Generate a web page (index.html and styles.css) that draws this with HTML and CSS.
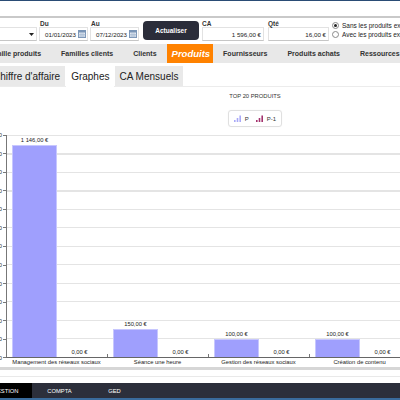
FILE: index.html
```html
<!DOCTYPE html>
<html lang="fr">
<head>
    <meta charset="UTF-8">
    <title>Statistiques - Produits</title>
    <link rel="stylesheet" href="styles.css">
</head>
<body>
    <div class="topbar"></div>
    <div class="header"></div>
    <div class="divider"></div>

    <div class="filters">
        <div class="field f-ref">
            <label>Référence</label>
            <div class="input select"><svg class="caret" width="5" height="3" viewBox="0 0 5 3"><path d="M0 0h5L2.5 3z" fill="#222"/></svg></div>
        </div>
        <div class="field f-date">
            <label>Du</label>
            <div class="input date"><span>01/01/2023</span><svg class="cal" width="8" height="8" viewBox="0 0 8 8"><rect x="0.5" y="0.5" width="7" height="7" fill="#dfe7f1" stroke="#7b96b8"/><rect x="0.5" y="0.5" width="7" height="2" fill="#7b96b8"/><path d="M3 2.5v5M5 2.5v5M0.5 4.5h7M0.5 6h7" stroke="#9fb3cc" stroke-width="0.6"/></svg></div>
        </div>
        <div class="field f-date">
            <label>Au</label>
            <div class="input date"><span>07/12/2023</span><svg class="cal" width="8" height="8" viewBox="0 0 8 8"><rect x="0.5" y="0.5" width="7" height="7" fill="#dfe7f1" stroke="#7b96b8"/><rect x="0.5" y="0.5" width="7" height="2" fill="#7b96b8"/><path d="M3 2.5v5M5 2.5v5M0.5 4.5h7M0.5 6h7" stroke="#9fb3cc" stroke-width="0.6"/></svg></div>
        </div>
        <button class="btn">Actualiser</button>
        <div class="field f-ca">
            <label>CA</label>
            <div class="input num">1 596,00 €</div>
        </div>
        <div class="field f-qte">
            <label>Qté</label>
            <div class="input num">16,00 €</div>
        </div>
        <div class="radios">
            <div class="radio-row"><span class="radio on"></span>Sans les produits exclus</div>
            <div class="radio-row"><span class="radio"></span>Avec les produits exclus</div>
        </div>
    </div>

    <div class="tabs">
        <div class="tab first">Famille produits</div>
        <div class="tab">Familles clients</div>
        <div class="tab">Clients</div>
        <div class="tab active">Produits</div>
        <div class="tab">Fournisseurs</div>
        <div class="tab">Produits achats</div>
        <div class="tab">Ressources</div>
    </div>

    <div class="subtabs">
        <div class="subtab first">Chiffre d'affaire</div>
        <div class="subtab active">Graphes</div>
        <div class="subtab">CA Mensuels</div>
    </div>

    <div class="panel">
        <div class="chart-head">
            <div class="chart-title">Top 20 produits</div>
            <div class="legend">
                <span class="legend-item"><svg width="7" height="7" viewBox="0 0 7 7"><path d="M0 7V5h1.6v2zM2.7 7V3h1.6v4zM5.4 7V0.5H7V7z" fill="#a9a9f7"/></svg>P</span>
                <span class="legend-item"><svg width="7" height="7" viewBox="0 0 7 7"><path d="M0 7V5h1.6v2zM2.7 7V3h1.6v4zM5.4 7V0.5H7V7z" fill="#a3326e"/></svg>P-1</span>
            </div>
        </div>

        <div class="chart">
            <div class="yaxis">
                <span>1 200</span><span>1 100</span><span>1 000</span><span>900</span><span>800</span><span>700</span><span>600</span><span>500</span><span>400</span><span>300</span><span>200</span><span>100</span><span>0</span>
            </div>
            <div class="plot">
                <div class="cat">
                    <div class="bar-col"><span class="val">1 146,00 €</span><div class="bar" style="height: 212px"></div></div>
                    <div class="bar-col"><span class="val">0,00 €</span></div>
                </div>
                <div class="cat">
                    <div class="bar-col"><span class="val">150,00 €</span><div class="bar" style="height: 28px"></div></div>
                    <div class="bar-col"><span class="val">0,00 €</span></div>
                </div>
                <div class="cat">
                    <div class="bar-col"><span class="val">100,00 €</span><div class="bar" style="height: 18.5px"></div></div>
                    <div class="bar-col"><span class="val">0,00 €</span></div>
                </div>
                <div class="cat">
                    <div class="bar-col"><span class="val">100,00 €</span><div class="bar" style="height: 18.5px"></div></div>
                    <div class="bar-col"><span class="val">0,00 €</span></div>
                </div>
            </div>
        </div>
        <div class="xlabels">
            <span>Management des réseaux sociaux</span>
            <span>Séance une heure</span>
            <span>Gestion des réseaux sociaux</span>
            <span>Création de contenu</span>
        </div>
    </div>

    <div class="footer-gap"></div>

    <div class="nav">
        <div class="nav-item active">GESTION</div>
        <div class="nav-item">COMPTA</div>
        <div class="nav-item">GED</div>
    </div>
    <div class="bottombar"></div>
</body>
</html>
```

FILE: styles.css
```css
* {
    margin: 0;
    padding: 0;
    box-sizing: border-box;
}

body {
    width: 400px;
    height: 400px;
    overflow: hidden;
    background: #fff;
    color: #222;
    font-family: "Liberation Sans", Arial, sans-serif;
}

.topbar {
    height: 1px;
    background: #2a4c75;
}

.header {
    height: 15px;
}

.divider {
    height: 2px;
    background: #c9c9c9;
}

/* filters */
.filters {
    height: 24px;
    display: flex;
    align-items: flex-start;
    white-space: nowrap;
}

.field {
    flex-shrink: 0;
}

.field label {
    display: block;
    margin-top: 2px;
    height: 7px;
    font-size: 6.5px;
    line-height: 7px;
    font-weight: bold;
    color: #333;
}

.input {
    height: 14px;
    background: #fff;
    border: 1px solid #e2e2e2;
    border-bottom-color: #c6c6c6;
    display: flex;
    align-items: center;
    font-size: 6.2px;
    color: #222;
}

.f-ref {
    width: 69px;
    margin-left: -32px;
}

.select {
    justify-content: flex-end;
    padding-right: 2px;
}

.f-date {
    width: 49px;
    margin-left: 2px;
}

.f-date label {
    padding-left: 1px;
}

.date {
    justify-content: flex-end;
    gap: 2px;
    padding-right: 1px;
}

.btn {
    width: 56px;
    height: 19px;
    flex-shrink: 0;
    margin: 3px 0 0 4px;
    background: #2b2d3a;
    color: #fff;
    border: none;
    border-radius: 4px;
    font-family: inherit;
    font-size: 6.5px;
    font-weight: bold;
}

.f-ca {
    width: 62px;
    margin-left: 3px;
}

.f-qte {
    width: 61px;
    margin-left: 4px;
}

.num {
    justify-content: flex-end;
    padding-right: 2px;
}

.radios {
    margin: 3px 0 0 3px;
    font-size: 6.5px;
    color: #222;
}

.radio-row {
    height: 9px;
    display: flex;
    align-items: center;
    gap: 3px;
}

.radio {
    width: 7px;
    height: 7px;
    border: 1px solid #8a8a8a;
    border-radius: 50%;
    background: #fff;
    display: flex;
    align-items: center;
    justify-content: center;
}

.radio.on::after {
    content: "";
    width: 3px;
    height: 3px;
    border-radius: 50%;
    background: #222;
}

/* main tabs */
.tabs {
    height: 19px;
    margin-top: 2px;
    background: #e8e8e8;
    display: flex;
    white-space: nowrap;
}

.tab {
    padding: 0 10px;
    flex-shrink: 0;
    display: flex;
    align-items: center;
    font-size: 7px;
    font-weight: bold;
    color: #333;
}

.tab.first {
    margin-left: -23px;
}

.tab.active {
    padding: 0 3px 0 5px;
    background: #ff8200;
    color: #fff;
    font-size: 9.5px;
    font-style: italic;
}

/* sub tabs */
.subtabs {
    height: 21px;
    margin-top: 3px;
    display: flex;
    gap: 1px;
    border-bottom: 1px solid #ececec;
    white-space: nowrap;
}

.subtab {
    padding: 0 5px;
    flex-shrink: 0;
    background: #e9e9e9;
    display: flex;
    align-items: center;
    font-size: 10px;
    color: #222;
}

.subtab.first {
    margin-left: -12px;
}

.subtab.active {
    background: #fff;
    margin-bottom: -1px;
    padding: 0 4px 0 5px;
}

/* chart panel */
.panel {
    padding-top: 5px;
    border-bottom: 3px solid #d6d6d6;
}

.chart-head {
    padding-left: 110px;
    display: flex;
    flex-direction: column;
    align-items: center;
}

.chart-title {
    height: 8px;
    font-size: 5.8px;
    line-height: 8px;
    text-transform: uppercase;
    color: #333;
}

.legend {
    height: 17px;
    margin-top: 10px;
    padding: 0 5px;
    border: 1px solid #e0e0e0;
    border-radius: 3px;
    box-shadow: 0 0 1px rgba(0,0,0,0.08);
    display: flex;
    align-items: center;
    gap: 7px;
    font-size: 6px;
    color: #333;
}

.legend-item {
    display: flex;
    align-items: center;
    gap: 4px;
}

.chart {
    margin-top: 8px;
    display: flex;
}

.yaxis {
    width: 40px;
    flex-shrink: 0;
    margin: -4px 0 -4px -34px;
    display: flex;
    flex-direction: column;
    justify-content: space-between;
    align-items: flex-end;
    font-size: 5.8px;
    color: #333;
}

.yaxis span {
    height: 8px;
    line-height: 8px;
    display: flex;
    align-items: center;
    gap: 1px;
}

.yaxis span::after {
    content: "";
    width: 3px;
    height: 1px;
    background: #777;
}

.plot {
    flex: 1;
    min-width: 0;
    height: 223px;
    border-left: 1px solid #777;
    border-bottom: 1px solid #666;
    background: repeating-linear-gradient(to bottom, #e4e4e4 0, #e4e4e4 1px, transparent 1px, transparent 18.5px);
    display: flex;
    align-items: flex-end;
}

.cat {
    width: 101px;
    height: 100%;
    padding: 0 5px;
    display: flex;
    align-items: flex-end;
    position: relative;
    flex-shrink: 0;
}

.cat::after {
    content: "";
    position: absolute;
    right: 0;
    bottom: 0;
    width: 1px;
    height: 3px;
    background: #777;
}

.bar-col {
    width: 45px;
    display: flex;
    flex-direction: column;
    align-items: center;
}

.val {
    font-size: 5.8px;
    line-height: 7px;
    margin-bottom: 1px;
    white-space: nowrap;
    color: #222;
}

.bar {
    width: 100%;
    background: #9f9ffd;
    border: 1px solid #c7c7fe;
    border-bottom: none;
}

.xlabels {
    height: 9px;
    padding-left: 6px;
    display: flex;
    white-space: nowrap;
}

.xlabels span {
    width: 101px;
    flex-shrink: 0;
    text-align: center;
    font-size: 5.8px;
    line-height: 9px;
    color: #222;
}

.footer-gap {
    height: 13px;
    background: linear-gradient(to bottom, #fff 0, #fff 6px, #e9e9e9 6px, #e9e9e9 7px, #fff 7px);
}

/* bottom navigation */
.nav {
    height: 15px;
    background: #2c2f3b;
    display: flex;
}

.nav-item {
    width: 55px;
    flex-shrink: 0;
    display: flex;
    align-items: center;
    justify-content: center;
    font-size: 5.8px;
    color: #fff;
}

.nav-item.active {
    margin-left: -21px;
    width: 53px;
    background: #000;
}

.bottombar {
    height: 2px;
    background: #3a6b9c;
}
```
